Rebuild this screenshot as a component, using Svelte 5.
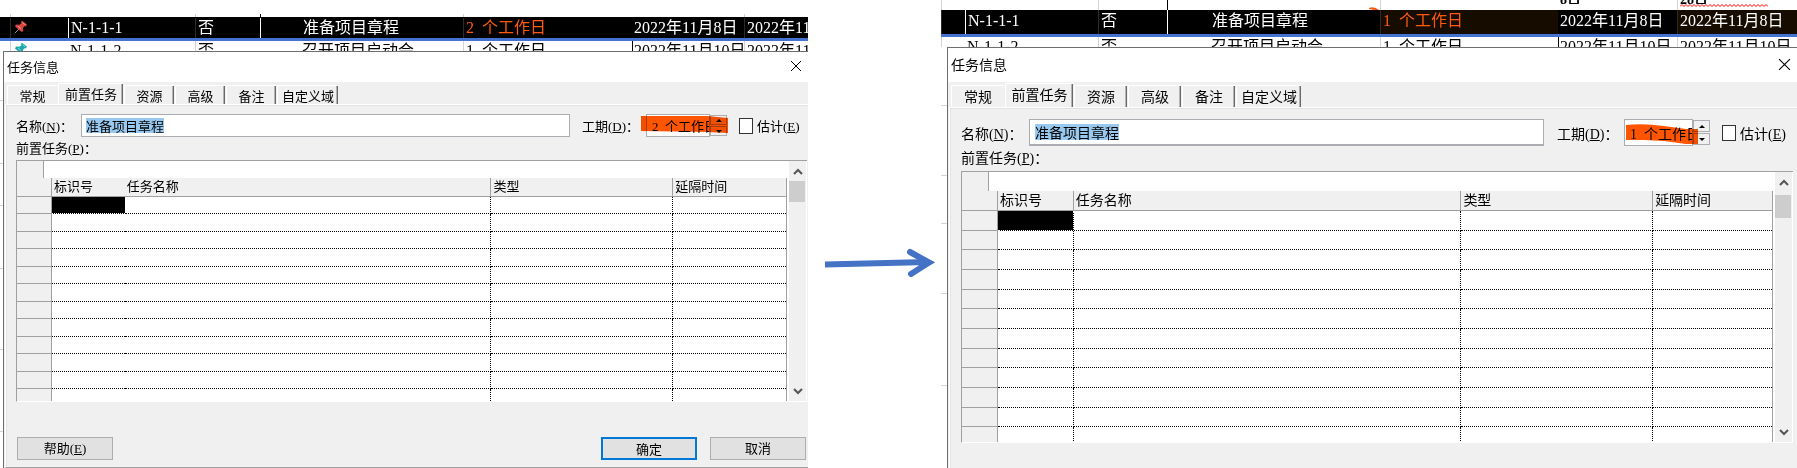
<script>
  const tabs = ['常规', '前置任务', '资源', '高级', '备注', '自定义域'];

  const panels = [
    {
      id: 'before',
      columns: '10fr 58fr 127fr 65fr 203fr 169fr 112fr 64fr',
      rows: [
        { pin: 'red', code: 'N-1-1-1', flag: '否', name: '准备项目章程', days: '2\u2002个工作日', start: '2022年11月8日', end: '2022年11月8日' },
        { pin: 'teal', code: 'N-1-1-2', flag: '否', name: '召开项目启动会', days: '1\u2002个工作日', start: '2022年11月10日', end: '2022年11月10日' }
      ],
      ticks: [50, 63, 42, 63, 81, 82],
      duration: '2\u2002个工作日',
      lines: 12,
      widths: ['35', '73', '367', '182', '113'],
      buttons: true
    },
    {
      id: 'after',
      columns: '0fr 24fr 133fr 69fr 213fr 178fr 119fr 120fr',
      rows: [
        { code: 'N-1-1-1', flag: '否', name: '准备项目章程', days: '1\u2002个工作日', start: '2022年11月8日', end: '2022年11月8日' },
        { code: 'N-1-1-2', flag: '否', name: '召开项目启动会', days: '1\u2002个工作日', start: '2022年11月10日', end: '2022年11月10日' }
      ],
      ticks: [59, 70, 48, 70, 92],
      duration: '1\u2002个工作日',
      lines: 12,
      widths: ['36', '76', '388', '192', '119'],
      buttons: false
    }
  ];

  const total = (list) => list.reduce((sum, w) => sum + Number(w), 0);
</script>

{#snippet pinIcon(tone)}
  <svg class="pin {tone}" viewBox="0 0 14 14" aria-hidden="true">
    <path class="needle" d="M5 9 L0.8 13.2" />
    <path class="body" d="M8 0.8 L13 4.4 L11.8 6.4 L10.4 6.2 L8.9 8 L9.4 11 L7.6 12 L1 6.6 L2 4.6 L5.4 4.8 L7.4 3.2 L7 2 Z" />
    <path class="shine" d="M8.6 2.6 L11.2 4.8 M4 6.2 L7 8.6" />
  </svg>
{/snippet}

{#snippet sheetRow(row, columns, selected)}
  <div class="row" class:selected style="grid-template-columns: {columns}">
    <span></span>
    <span class="line">{#if row.pin}{@render pinIcon(row.pin)}{/if}</span>
    <span class="code">{row.code}</span>
    <span class="line">{row.flag}</span>
    <span class="name">{row.name}</span>
    <span class="line days">{row.days}</span>
    <span class="start">{row.start}</span>
    <span class="line end">{row.end}</span>
  </div>
{/snippet}

<main>
  {#each panels as p, i}
    <section class="panel {p.id}">
      <div class="above row" style="grid-template-columns: {p.columns}">
        <span></span>
        <span class="line"></span>
        <span></span>
        <span class="line"></span>
        <span class="dark"></span>
        <span class="line"></span>
        <span class="start">{#if i === 1}<b>8日</b>{/if}</span>
        <span class="line end">{#if i === 1}<b>28日</b>
          <svg class="squiggle" viewBox="0 0 88 3" aria-hidden="true">
            <path d={'M0 2.5' + ' l2 -2 l2 2'.repeat(22)} />
          </svg>{/if}</span>
        {#if i === 1}
          <svg class="speck" viewBox="0 0 10 3" aria-hidden="true"><path d="M0 1 Q5 -1 10 3 L5 3 L0 2 Z" /></svg>
        {/if}
      </div>
      {@render sheetRow(p.rows[0], p.columns, true)}
      {@render sheetRow(p.rows[1], p.columns, false)}

      <div class="lower">
        <div class="edge">
          {#each p.ticks as t}<i style="height: {t}px"></i>{/each}
        </div>
        <div class="dialog" role="dialog" aria-labelledby="{p.id}-title">
          <header>
            <h2 id="{p.id}-title">任务信息</h2>
            <button class="close" aria-label="关闭">
              <svg viewBox="0 0 12 12"><path d="M1 1 L11 11 M11 1 L1 11" /></svg>
            </button>
          </header>
          <nav role="tablist">
            {#each tabs as t, n}
              <button role="tab" aria-selected={n === 1} class:active={n === 1} class:wide={n === 5}>{t}</button>
            {/each}
          </nav>
          <div class="page">
            <div class="form">
              <label for="{p.id}-name">名称(<u>N</u>)：</label>
              <input id="{p.id}-name" class="task" type="text" value="准备项目章程" />
              <label class="duration-label" for="{p.id}-dur">工期(<u>D</u>)：</label>
              <div class="spin">
                <input id="{p.id}-dur" type="text" value={p.duration} />
                <div class="arrows">
                  <button aria-label="增加"><svg viewBox="0 0 6 3"><path d="M0 3 L3 0 L6 3 Z" /></svg></button>
                  <button aria-label="减少"><svg viewBox="0 0 6 3"><path d="M0 0 L3 3 L6 0 Z" /></svg></button>
                </div>
                {#if i === 0}
                  <svg class="marker" viewBox="0 0 87 23" preserveAspectRatio="none" aria-hidden="true">
                    <path d="M0 2 L66 2 L87 4 L87 19 L66 18 L0 17 Z" />
                  </svg>
                {:else}
                  <svg class="marker" viewBox="0 0 87 27" preserveAspectRatio="none" aria-hidden="true">
                    <path d="M2 6 Q20 4 40 7 L62 10 L74 10 L74 25 L62 25 L40 22 L20 21 L2 21 Z" />
                  </svg>
                {/if}
              </div>
              <label class="check"><input type="checkbox" /><span>估计(<u>E</u>)</span></label>
            </div>
            <p class="caption">前置任务(<u>P</u>)：</p>
            <div class="grid">
              <div class="sheet">
                <div class="entry"><span></span></div>
                <table>
                  <colgroup>
                    {#each p.widths as w}<col style="width: {(w / total(p.widths)) * 100}%" />{/each}
                  </colgroup>
                  <thead>
                    <tr><th></th><th>标识号</th><th>任务名称</th><th>类型</th><th>延隔时间</th></tr>
                  </thead>
                  <tbody>
                    {#each Array(p.lines) as _, n}
                      <tr><th></th><td class:current={n === 0}></td><td></td><td></td><td></td></tr>
                    {/each}
                  </tbody>
                </table>
              </div>
              <div class="scroll">
                <button aria-label="向上滚动"><svg viewBox="0 0 10 7"><path d="M1 6 L5 2 L9 6" /></svg></button>
                <div class="thumb"></div>
                <button class="down" aria-label="向下滚动"><svg viewBox="0 0 10 7"><path d="M1 1 L5 5 L9 1" /></svg></button>
              </div>
            </div>
            {#if p.buttons}
              <footer>
                <button>帮助(<u>E</u>)</button>
                <button class="ok">确定</button>
                <button>取消</button>
              </footer>
            {/if}
          </div>
        </div>
      </div>
    </section>
    {#if i === 0}
      <div class="between">
        <svg viewBox="0 0 133 30" aria-hidden="true">
          <path class="shaft" d="M17 17.500 L120 15" />
          <path class="head" d="M102 5 L121 15.500 L103 27" />
          <path class="tip" d="M108 6 L127 15.500 L108 25 L112 15.500 Z" />
        </svg>
      </div>
    {/if}
  {/each}
</main>

<style>
  :global(body) { margin: 0; background: #fff; }

  main {
    display: grid;
    grid-template-columns: 808fr 133fr 856fr;
    min-height: 100vh;
    overflow: hidden;
    color: #000;
    font-family: "Liberation Serif", "Noto Sans CJK SC", sans-serif;
    font-weight: 400;
  }
  main * { box-sizing: border-box; }
  button, input { font: inherit; color: inherit; margin: 0; padding: 0; border: 0; border-radius: 0; }
  svg { display: block; fill: none; }

  .panel {
    --size: 13px;
    --above: 17px;
    --band: 24px;
    --title: 30px;
    --tabs: 22px;
    --tab: 50px;
    --tab-active: 65px;
    --field: 23px;
    --entry: 17px;
    --head: 19px;
    display: flex;
    flex-direction: column;
    min-width: 0;
    overflow: hidden;
    font-size: var(--size);
  }
  .after {
    --size: 14px;
    --above: 10px;
    --band: 27px;
    --title: 34px;
    --tabs: 25px;
    --tab: 53px;
    --tab-active: 68px;
    --field: 27px;
    --entry: 19px;
    --head: 20px;
  }

  .row {
    display: grid;
    height: 10px;
    overflow: hidden;
    font-size: 16px;
    line-height: 20px;
    white-space: nowrap;
  }
  .row span { min-width: 0; overflow: hidden; padding-left: 2px; }
  .row > span:first-child { padding: 0; }
  .row .line { border-left: 1px solid #d4d4d4; }
  .row .code { padding-left: 2px; }
  .row .name { padding-left: 42px; }
  .after .row .name { padding-left: 44px; }
  .row .start { border-left: 1px solid #000; padding-left: 1px; }
  .selected {
    height: var(--band);
    padding-top: 1px;
    background: #000;
    color: #fff;
    border-bottom: 3px solid #4472d0;
  }
  .after .selected { padding-top: 0; line-height: 22px; }
  .selected .line { border-color: #2b2b2b; }
  .selected .code, .selected .name { border-left: 1px solid #fff; }
  .selected .days { color: #ff5a0c; }
  .after .selected .days, .after .selected .end { background: #160c00; }
  .above { position: relative; height: var(--above); line-height: 15px; }
  .before .above { padding-top: 14px; }
  .above .dark { border-left: 1px solid #000; }
  .above .start { border-color: transparent; }
  .above b { display: block; height: 4px; overflow: hidden; font-size: 14px; line-height: 0; font-weight: 700; }
  .squiggle { width: 88px; height: 3px; stroke: #f00; }
  .speck { position: absolute; left: 50%; bottom: 0; width: 10px; height: 3px; fill: #ff5a0c; }

  .pin { width: 14px; height: 14px; margin: 1px 0 0 1px; }
  .selected .pin { margin-top: 2px; }
  .red { --pin: #d8453f; --glint: #f59a92; }
  .teal { --pin: #1fa5ad; --glint: #79dfe2; }
  .needle { stroke: #999; }
  .body { fill: var(--pin); }
  .shine { stroke: var(--glint); }

  .lower { display: flex; flex: 1; }
  .edge { width: 3px; flex: none; }
  .after .edge { width: 6px; }
  .edge i { display: block; border-bottom: 1px solid #d4d4d4; }

  .dialog {
    display: flex;
    flex-direction: column;
    flex: 1;
    min-width: 0;
    background: #f0f0f0;
    border: solid #6e6e6e;
    border-width: 1px 0 0 1px;
  }
  header {
    display: flex;
    align-items: center;
    justify-content: space-between;
    height: var(--title);
    padding: 0 6px 2px 3px;
    background: #fff;
  }
  h2 { margin: 0; font-size: inherit; font-weight: inherit; }
  .close { background: none; }
  .close svg { width: 12px; height: 12px; stroke: #000; }
  .after .close svg { width: 13px; height: 13px; }

  nav { display: flex; align-items: flex-end; height: var(--tabs); padding-left: 3px; }
  nav button {
    width: var(--tab);
    height: calc(var(--tabs) - 3px);
    padding-bottom: 2px;
    background: #f0f0f0;
    border: solid #fff;
    border-width: 1px 0 0 1px;
    box-shadow: inset -1px 0 #6a6a6a, inset -2px 0 #b4b4b4;
    margin-right: 1px;
  }
  nav button:first-child { box-shadow: none; }
  nav .active { width: var(--tab-active); height: calc(var(--tabs) - 1px); padding-bottom: 4px; }
  nav .wide { width: auto; padding: 0 4px 2px; }

  .page {
    display: flex;
    flex-direction: column;
    flex: 1;
    margin-left: 1px;
    padding: 9px 1px 0 10px;
    border-top: 1px solid #fff;
    border-left: 1px solid #fff;
    box-shadow: inset 1px 1px #e3e3e3;
  }
  .before .page { border-bottom: 1px solid #a0a0a0; }
  .after .page { padding: 11px 4px 0 11px; }

  .form { display: flex; align-items: center; height: var(--field); white-space: nowrap; }
  .form > label:first-child { width: 65px; }
  .after .form > label:first-child { width: 68px; }
  .task {
    flex: 1;
    min-width: 0;
    height: var(--field);
    padding: 0 4px;
    border: 1px solid #abadb3;
    background: linear-gradient(#99c9ef, #99c9ef) 4px 3px / 6em 15px no-repeat #fff;
  }
  .after .task { padding: 0 5px; border-bottom-width: 2px; background-position: 5px 4px; background-size: 6em 16px; }
  .duration-label { width: 64px; margin-left: 12px; }
  .after .duration-label { width: 67px; margin-left: 13px; }
  .spin { position: relative; display: flex; width: 81px; height: var(--field); }
  .after .spin { width: 86px; }
  .spin input { flex: 1; min-width: 0; padding-left: 5px; border: 1px solid #abadb3; background: #fff; }
  .arrows { display: flex; flex-direction: column; gap: 1px; width: 17px; padding: 1px 0; }
  .arrows button { flex: 1; display: grid; place-items: center; border: 1px solid #abadb3; background: #f0f0f0; }
  .arrows svg { width: 6px; height: 3px; fill: #000; }
  .marker {
    position: absolute;
    top: 0;
    left: -5px;
    width: 87px;
    height: 100%;
    fill: #ff5500;
    mix-blend-mode: multiply;
    pointer-events: none;
  }
  .after .marker { left: 0; }
  .check { display: flex; align-items: center; gap: 4px; width: 68px; margin-left: 12px; }
  .after .check { width: 71px; }
  .check input { appearance: none; width: 14px; height: 16px; border: 1px solid #333; background: #fff; }

  .caption { margin: 0; height: 23px; line-height: 23px; }
  .after .caption { height: 25px; line-height: 25px; }

  .grid {
    display: flex;
    gap: 2px;
    height: 242px;
    padding-right: 1px;
    overflow: hidden;
    background: #fff;
    border: 1px solid #a0a0a0;
    border-right: 0;
    border-bottom-color: #fff;
  }
  .after .grid { height: 272px; }
  .sheet { flex: 1; min-width: 0; }
  .entry { height: var(--entry); background: #fff; }
  .entry span { display: block; width: 27px; height: 100%; background: #f0f0f0; border-right: 1px solid #a0a0a0; }
  table { width: 100%; table-layout: fixed; border-collapse: separate; border-spacing: 0; border-right: 1px solid #a0a0a0; }
  th, td { padding: 0; font-weight: inherit; text-align: left; line-height: 16px; }
  th { background: #f0f0f0; border-bottom: 1px solid #a0a0a0; }
  thead th { height: var(--head); padding-left: 2px; border-right: 1px solid #a0a0a0; }
  tbody th { border-right: 1px solid #a0a0a0; }
  thead th:last-child { border-right: 0; }
  tbody tr { height: 17px; }
  .before tbody tr:nth-child(even) { height: 18px; }
  .after tbody tr { height: 20px; }
  .after tbody tr:nth-child(3n + 2) { height: 19px; }
  td { border: dotted #000; border-width: 0 1px 1px 0; }
  td:last-child { border-right: 0; }
  .before th:nth-child(2), .before td:nth-child(2) { border-right: 0; }
  .current { background: #000; border-color: #fff; }

  .scroll { display: flex; flex-direction: column; width: 17px; background: #f0f0f0; }
  .scroll button { display: grid; place-items: center; height: 20px; background: none; }
  .scroll svg { width: 10px; height: 7px; stroke: #555; stroke-width: 2; }
  .thumb { height: 21px; margin-right: 1px; background: #cdcdcd; }
  .after .thumb { height: 23px; margin-top: 3px; }
  .scroll .down { margin-top: auto; }

  footer { display: flex; gap: 13px; margin-top: 35px; padding: 0 1px 6px; }
  footer button { width: 96px; height: 23px; padding-bottom: 2px; background: #e1e1e1; border: 1px solid #adadad; }
  footer button:first-child { margin-right: auto; }
  footer .ok { border: 2px solid #0078d7; }

  .between { padding-top: 247px; }
  .between svg { width: 100%; stroke: #4472c4; }
  .shaft { stroke-width: 6; }
  .head { stroke-width: 6; stroke-linecap: round; }
  .tip { fill: #4472c4; stroke: none; }
</style>
